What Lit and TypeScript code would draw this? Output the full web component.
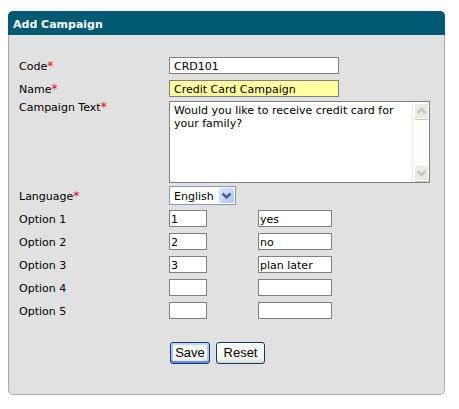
import { LitElement, html, css } from "lit";
import { customElement } from "lit/decorators.js";

interface Option {
  key: string;
  text: string;
}

const OPTIONS: Option[] = [
  { key: "1", text: "yes" },
  { key: "2", text: "no" },
  { key: "3", text: "plan later" },
  { key: "", text: "" },
  { key: "", text: "" },
];

@customElement("app-root")
export class AppRoot extends LitElement {
  static styles = css`
    :host {
      display: block;
      padding: 11px 14px 14px 8px;
      background: #fff;
      color: #000;
      font: 11px/14px Verdana, "DejaVu Sans", sans-serif;
    }
    * {
      box-sizing: border-box;
    }
    .panel {
      border-radius: 5px;
      background: #e1e1e1;
      border: 1px solid #acacac;
      border-top: 0;
    }
    .title {
      margin: 0 -1px;
      padding: 4px 5px 0;
      border-radius: 5px 5px 0 0;
      background: #005a73;
      color: #fff;
      font-size: 11px;
      font-weight: bold;
      line-height: 20px;
      height: 24px;
    }
    form {
      padding: 19px 14px 30px 10px;
    }
    .row {
      display: grid;
      grid-template-columns: 150px 1fr;
      align-items: center;
      min-height: 23px;
    }
    .row.top {
      align-items: start;
    }
    label {
      padding-top: 2px;
    }
    .top label {
      padding-top: 1px;
    }
    .star {
      color: #f00;
      font-size: 12px;
      line-height: 11px;
    }
    input,
    textarea,
    select,
    button {
      font: inherit;
      color: inherit;
      margin: 0;
      border-radius: 0;
      outline: none;
    }
    input {
      display: block;
      height: 17px;
      padding: 1px 1px 0;
      border: 1px solid #808080;
      background: #fff;
    }
    .wide {
      width: 170px;
      padding: 1px 4px 0;
    }
    .filled {
      background: #ffffa0;
    }
    .pair {
      display: grid;
      grid-template-columns: 38px 74px;
      gap: 51px;
    }
    .pair input {
      width: 100%;
    }
    .area {
      display: flex;
      height: 82px;
      margin: 1px 0;
      border: 1px solid #808080;
      background: #fff;
    }
    textarea {
      flex: 1;
      min-width: 0;
      border: 0;
      padding: 2px 4px;
      line-height: 13px;
      background: transparent;
      resize: none;
      overflow: hidden;
    }
    .bar {
      width: 17px;
      padding: 1px;
      display: flex;
      flex-direction: column;
      justify-content: space-between;
      border-left: 1px solid #eeede5;
      background: #fefefa;
    }
    .bar button {
      display: block;
      width: 15px;
      height: 16px;
      padding: 0;
      border: 1px solid #fff;
      border-radius: 2px;
      background: linear-gradient(135deg, #f1f1ec, #e4e4dd);
      box-shadow: 0 1px 0 #c9c7ac, inset 0 0 0 1px #e8e8e0;
    }
    svg {
      display: block;
    }
    .select {
      position: relative;
      width: 67px;
    }
    select {
      appearance: none;
      display: block;
      width: 100%;
      height: 19px;
      padding: 2px 4px 0;
      border: 1px solid #7f9db9;
      background: #fff;
    }
    .drop {
      position: absolute;
      top: 2px;
      right: 2px;
      width: 15px;
      height: 15px;
      border-radius: 2px;
      background: linear-gradient(135deg, #dbe6fe, #aec8f7);
      pointer-events: none;
    }
    .actions {
      display: flex;
      gap: 6px;
      padding: 20px 0 0 151px;
    }
    .action {
      height: 22px;
      width: 49px;
      padding: 0;
      border: 1px solid #003c74;
      border-radius: 3px;
      background: linear-gradient(#fff, #f3f3ee 80%, #dcd6cb);
      font: 13px/18px "Liberation Sans", Arial, sans-serif;
    }
    .action.primary {
      width: 40px;
      box-shadow: inset 0 2px 0 #c4dafb, inset 0 -2px 0 #6c8ae8,
        inset 2px 0 0 #a9c4f5, inset -2px 0 0 #a9c4f5;
    }
  `;

  private star() {
    return html`<span class="star">*</span>`;
  }

  private chevron(up: boolean, color: string) {
    return html`<svg width="13" height="14" viewBox="0 0 13 14" aria-hidden="true">
      <path
        d=${up ? "M2.5 9 L6.5 5 L10.5 9" : "M2.5 5 L6.5 9 L10.5 5"}
        fill="none"
        stroke=${color}
        stroke-width="2.6"
      />
    </svg>`;
  }

  render() {
    return html`
      <section class="panel">
        <h1 class="title">Add Campaign</h1>
        <form @submit=${(e: Event) => e.preventDefault()}>
          <div class="row">
            <label for="code">Code${this.star()}</label>
            <div><input class="wide" id="code" value="CRD101" /></div>
          </div>
          <div class="row">
            <label for="name">Name${this.star()}</label>
            <div><input class="wide filled" id="name" value="Credit Card Campaign" /></div>
          </div>
          <div class="row top">
            <label for="text">Campaign Text${this.star()}</label>
            <div class="area">
              <textarea
                id="text"
                spellcheck="false"
                .value=${"Would you like to receive credit card for your family?"}
              ></textarea>
              <div class="bar">
                <button type="button" tabindex="-1" aria-label="Scroll up">
                  ${this.chevron(true, "#c6c6c0")}
                </button>
                <button type="button" tabindex="-1" aria-label="Scroll down">
                  ${this.chevron(false, "#c6c6c0")}
                </button>
              </div>
            </div>
          </div>
          <div class="row">
            <label for="language">Language${this.star()}</label>
            <div class="select">
              <select id="language">
                <option>English</option>
              </select>
              <svg class="drop" viewBox="0 0 15 15" aria-hidden="true">
                <path d="M3.5 5.5 L7.5 9.5 L11.5 5.5" fill="none" stroke="#4d6185" stroke-width="2.6" />
              </svg>
            </div>
          </div>
          ${OPTIONS.map(
            (option, i) => html`
              <div class="row">
                <label for="key-${i}">Option ${i + 1}</label>
                <div class="pair">
                  <input id="key-${i}" .value=${option.key} />
                  <input aria-label="Option ${i + 1} text" .value=${option.text} />
                </div>
              </div>
            `
          )}
          <div class="actions">
            <button class="action primary" type="submit">Save</button>
            <button class="action" type="reset">Reset</button>
          </div>
        </form>
      </section>
    `;
  }
}
